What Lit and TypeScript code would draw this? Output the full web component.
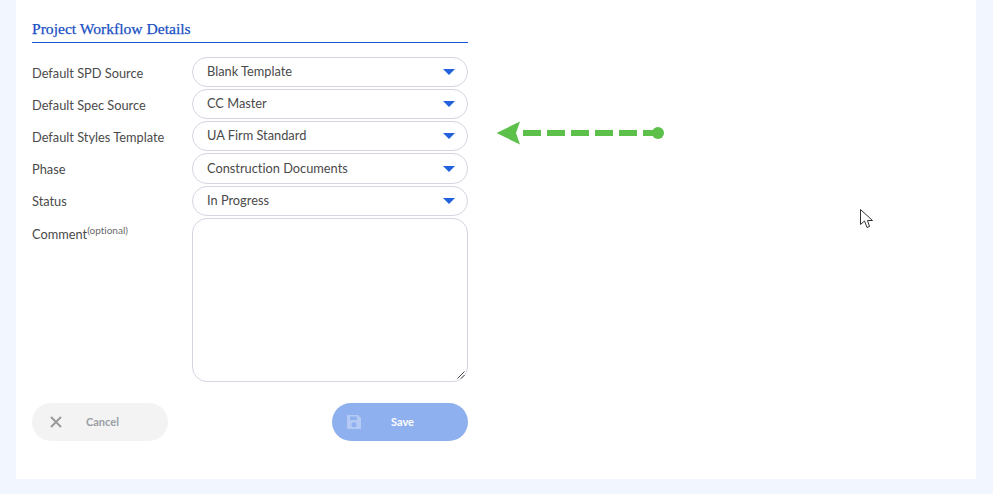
import { LitElement, html, css } from "lit";
import { customElement } from "lit/decorators.js";

const rows = [
  ["Default SPD Source", "Blank Template"],
  ["Default Spec Source", "CC Master"],
  ["Default Styles Template", "UA Firm Standard"],
  ["Phase", "Construction Documents"],
  ["Status", "In Progress"],
];

@customElement("app-root")
export class AppRoot extends LitElement {
  static styles = css`
    :host { display: block; width: 993px; height: 494px; background: #f2f6fe; font-family: Lato, sans-serif; font-variant-ligatures: none; overflow: hidden; position: relative; }
    .card { box-sizing: border-box; margin-left: 16px; width: 960px; height: 479px; background: #fff; padding: 20px 16px 0; }
    .form { width: 436px; }
    h2 { margin: 0; font: 400 15.6px/17px "Liberation Serif", serif; color: #1a50c4; -webkit-text-stroke: 0.25px #1a50c4; border-bottom: 1px solid #1556d0; height: 22px; }
    .rows { display: flex; flex-direction: column; gap: 2px; margin-top: 13.8px; }
    .row { display: grid; grid-template-columns: 160px 276px; height: 30.2px; }
    .label { font-size: 12.8px; color: #4a4a4a; line-height: 31.4px; padding-top: 0.8px; white-space: nowrap; }
    .select { box-sizing: border-box; height: 30.2px; border: 1px solid #d3d6e2; border-radius: 15px; display: flex; align-items: center; justify-content: space-between; padding: 0 12px 1.7px 14px; font-size: 12.8px; color: #4a4a4a; }
    .caret { width: 0; height: 0; border-left: 6.5px solid transparent; border-right: 6.5px solid transparent; border-top: 6.5px solid #2260dc; margin-top: 2px; }
    .comment-row { display: grid; grid-template-columns: 160px 276px; height: 164px; }
    .comment-label { font-size: 12.8px; color: #4a4a4a; line-height: 32px; }
    sup { font-size: 10px; color: #6a6a6a; line-height: 0; vertical-align: 5px; }
    .area { box-sizing: border-box; height: 164px; border: 1px solid #d3d6e2; border-radius: 15px; position: relative; }
    .grip { position: absolute; right: 1px; bottom: 1px; }
    .buttons { display: flex; justify-content: space-between; margin-top: 21px; }
    .btn { box-sizing: border-box; width: 136px; height: 38px; border-radius: 19px; display: flex; align-items: center; font-size: 11px; font-weight: 700; }
    .cancel { background: #f3f3f3; color: #9a9ea6; padding-left: 17px; }
    .save { background: #8fb0ee; color: #fff; padding-left: 14px; }
    .cancel span { margin-left: 23px; }
    .save span { margin-left: 29px; }
    .arrow { position: absolute; left: 490px; top: 115px; }
    .cursor { position: absolute; left: 858px; top: 207px; }
  `;

  render() {
    return html`
      <div class="card">
        <div class="form">
          <h2>Project Workflow Details</h2>
          <div class="rows">
            ${rows.map(([l, v]) => html`
              <div class="row">
                <div class="label">${l}</div>
                <div class="select"><span>${v}</span><i class="caret"></i></div>
              </div>`)}
            <div class="comment-row">
              <div class="comment-label">Comment<sup>(optional)</sup></div>
              <div class="area">
                <svg class="grip" width="10" height="10" viewBox="0 0 10 10">
                  <path d="M1.5 8.5 8.5 1.5M5 8.5 8.5 5" stroke="#444" stroke-width="1" fill="none"></path>
                </svg>
              </div>
            </div>
          </div>
          <div class="buttons">
            <div class="btn cancel">
              <svg width="14" height="14" viewBox="0 0 14 14"><path d="M2 2 12 12M12 2 2 12" stroke="#9a9a9a" stroke-width="2" fill="none"></path></svg>
              <span>Cancel</span>
            </div>
            <div class="btn save">
              <svg width="16" height="16" viewBox="0 0 16 16">
                <path fill-rule="evenodd" fill="#b4caf4" d="M1.5 1h10.5L15 4v10.5a.5.5 0 0 1-.5.5h-13a.5.5 0 0 1-.5-.5v-13a.5.5 0 0 1 .5-.5zM4 2.5v3.5h7V2.5zM8 8.2a2.5 2.5 0 1 0 0 5 2.5 2.5 0 0 0 0-5z"></path>
              </svg>
              <span>Save</span>
            </div>
          </div>
        </div>
      </div>
      <svg class="arrow" width="180" height="36" viewBox="0 0 180 36">
        <path d="M6.5 18 30 6.5 26 18 30 29.5z" fill="#5cc04a"></path>
        <path d="M33 18H168" stroke="#5cc04a" stroke-width="6" stroke-dasharray="18 6" fill="none"></path>
        <circle cx="168" cy="18" r="6" fill="#5cc04a"></circle>
      </svg>
      <svg class="cursor" width="17" height="24" viewBox="0 0 17 24">
        <path d="M2.5 2.5V17.5L6.5 14 9 20.5 11.5 19.5 9.5 13.5H14.5z" fill="#fff" stroke="#333" stroke-width="1"></path>
      </svg>
    `;
  }
}
